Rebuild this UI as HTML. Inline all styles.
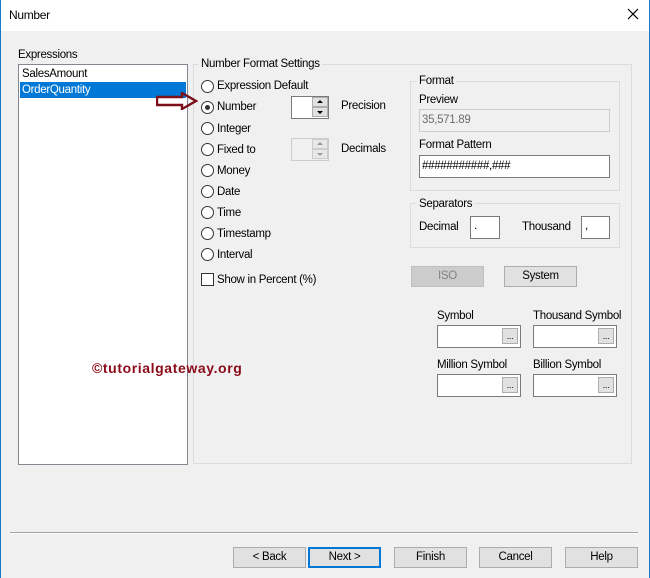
<!DOCTYPE html>
<html><head><style>
*{margin:0;padding:0;box-sizing:border-box}
body{width:650px;height:578px;overflow:hidden;background:#f0f0f0;font-family:"Liberation Sans",sans-serif;font-size:11.5px;color:#000;position:relative;letter-spacing:-0.3px}
.a{position:absolute}
.t{position:absolute;white-space:nowrap;line-height:14px}
.grp{position:absolute;border:1px solid #dcdcdc}
.lg{position:absolute;background:#f0f0f0;padding:0 2px;line-height:14px;white-space:nowrap}
.in{position:absolute;background:#fff;border:1px solid #7a7a7a}
.rad{position:absolute;width:13px;height:13px;border:1px solid #333;border-radius:50%;background:#fff}
.btn{position:absolute;background:#e1e1e1;border:1px solid #adadad;text-align:center;line-height:19px;height:21px}
.dots{position:absolute;right:2px;top:2px;width:16px;height:16px;background:#e1e1e1;border:1px solid #adadad;font-size:9px;text-align:center;line-height:14px}
</style></head><body>
<div class="a" style="left:0;top:0;width:650px;height:31px;background:#fff"></div>
<div class="a" style="left:0;top:0;width:1px;height:578px;background:#1979ca"></div>
<div class="a" style="left:649px;top:0;width:1px;height:578px;background:#1979ca"></div>
<div class="t" style="left:9px;top:8px;font-size:12px">Number</div>
<svg class="a" style="left:627px;top:8px" width="12" height="12"><path d="M1 1L11 11M11 1L1 11" stroke="#000" stroke-width="1.2"/></svg>

<div class="t" style="left:18px;top:48px">Expressions</div>
<div class="a" style="left:18px;top:64px;width:170px;height:401px;background:#fff;border:1px solid #828790"></div>
<div class="t" style="left:22px;top:67px">SalesAmount</div>
<div class="a" style="left:20px;top:82px;width:166px;height:16px;background:#0078d7"></div>
<div class="t" style="left:22px;top:83px;color:#fff">OrderQuantity</div>

<div class="grp" style="left:193px;top:64px;width:439px;height:400px"></div>
<div class="lg" style="left:199px;top:57px">Number Format Settings</div>

<svg class="a" style="left:156px;top:92px" width="42" height="18"><path d="M1 5H26V1L40 9L26 17V13H1Z" fill="none" stroke="#7b0f1a" stroke-width="2.4"/></svg>

<div class="rad" style="left:201px;top:80px"></div><div class="t" style="left:217px;top:79px">Expression Default</div>
<div class="rad" style="left:201px;top:101px"></div><div class="a" style="left:205px;top:105px;width:5px;height:5px;border-radius:50%;background:#333"></div><div class="t" style="left:217px;top:100px">Number</div>
<div class="rad" style="left:201px;top:122px"></div><div class="t" style="left:217px;top:122px">Integer</div>
<div class="rad" style="left:201px;top:143px"></div><div class="t" style="left:217px;top:143px">Fixed to</div>
<div class="rad" style="left:201px;top:164px"></div><div class="t" style="left:217px;top:164px">Money</div>
<div class="rad" style="left:201px;top:185px"></div><div class="t" style="left:217px;top:185px">Date</div>
<div class="rad" style="left:201px;top:206px"></div><div class="t" style="left:217px;top:206px">Time</div>
<div class="rad" style="left:201px;top:227px"></div><div class="t" style="left:217px;top:227px">Timestamp</div>
<div class="rad" style="left:201px;top:248px"></div><div class="t" style="left:217px;top:248px">Interval</div>
<div class="a" style="left:201px;top:273px;width:13px;height:13px;border:1px solid #333;background:#fff"></div><div class="t" style="left:217px;top:273px">Show in Percent (%)</div>

<div class="a" style="left:291px;top:96px;width:38px;height:23px;background:#fff;border:1px solid #7a7a7a"></div>
<div class="a" style="left:312px;top:97px;width:16px;height:10px;background:#e1e1e1;border:1px solid #adadad"></div>
<div class="a" style="left:312px;top:107px;width:16px;height:10px;background:#e1e1e1;border:1px solid #adadad"></div>
<svg class="a" style="left:312px;top:97px" width="16" height="21"><path d="M5 6H11L8 3Z M5 14H11L8 17Z" fill="#000"/></svg>
<div class="t" style="left:341px;top:99px">Precision</div>

<div class="a" style="left:291px;top:138px;width:38px;height:23px;background:#f0f0f0;border:1px solid #ccc"></div>
<div class="a" style="left:312px;top:139px;width:16px;height:10px;background:#e8e8e8;border:1px solid #ccc"></div>
<div class="a" style="left:312px;top:149px;width:16px;height:10px;background:#e8e8e8;border:1px solid #ccc"></div>
<svg class="a" style="left:312px;top:139px" width="16" height="21"><path d="M5 6H11L8 3Z M5 14H11L8 17Z" fill="#999"/></svg>
<div class="t" style="left:341px;top:142px">Decimals</div>

<div class="grp" style="left:410px;top:81px;width:210px;height:110px"></div>
<div class="lg" style="left:417px;top:74px">Format</div>
<div class="t" style="left:419px;top:93px">Preview</div>
<div class="a" style="left:419px;top:109px;width:191px;height:23px;background:#f0f0f0;border:1px solid #ccc"></div>
<div class="t" style="left:422px;top:113px;color:#6d6d6d">35,571.89</div>
<div class="t" style="left:419px;top:138px">Format Pattern</div>
<div class="in" style="left:419px;top:155px;width:191px;height:23px"></div>
<div class="t" style="left:422px;top:159px">###########,###</div>

<div class="grp" style="left:410px;top:203px;width:210px;height:45px"></div>
<div class="lg" style="left:417px;top:197px">Separators</div>
<div class="t" style="left:419px;top:220px">Decimal</div>
<div class="in" style="left:470px;top:216px;width:30px;height:23px"></div><div class="t" style="left:474px;top:219px">.</div>
<div class="t" style="left:522px;top:220px">Thousand</div>
<div class="in" style="left:581px;top:216px;width:29px;height:23px"></div><div class="t" style="left:585px;top:219px">,</div>

<div class="btn" style="left:411px;top:266px;width:73px;background:#cccccc;border-color:#bfbfbf;color:#838383">ISO</div>
<div class="btn" style="left:504px;top:266px;width:73px">System</div>

<div class="t" style="left:437px;top:309px">Symbol</div>
<div class="t" style="left:533px;top:309px">Thousand Symbol</div>
<div class="in" style="left:437px;top:325px;width:84px;height:23px"><div class="dots">...</div></div>
<div class="in" style="left:533px;top:325px;width:84px;height:23px"><div class="dots">...</div></div>
<div class="t" style="left:437px;top:358px">Million Symbol</div>
<div class="t" style="left:533px;top:358px">Billion Symbol</div>
<div class="in" style="left:437px;top:374px;width:84px;height:23px"><div class="dots">...</div></div>
<div class="in" style="left:533px;top:374px;width:84px;height:23px"><div class="dots">...</div></div>

<div class="t" style="left:92px;top:361px;color:#8b0a1a;font-weight:bold;font-size:14px;letter-spacing:0.6px">©tutorialgateway.org</div>

<div class="a" style="left:10px;top:532px;width:628px;height:1px;background:#a0a0a0"></div>
<div class="a" style="left:10px;top:533px;width:628px;height:1px;background:#fff"></div>
<div class="btn" style="left:233px;top:547px;width:73px">&lt; Back</div>
<div class="btn" style="left:308px;top:547px;width:73px;border:2px solid #0078d7;line-height:17px">Next &gt;</div>
<div class="btn" style="left:394px;top:547px;width:73px">Finish</div>
<div class="btn" style="left:479px;top:547px;width:73px">Cancel</div>
<div class="btn" style="left:565px;top:547px;width:73px">Help</div>
</body></html>
